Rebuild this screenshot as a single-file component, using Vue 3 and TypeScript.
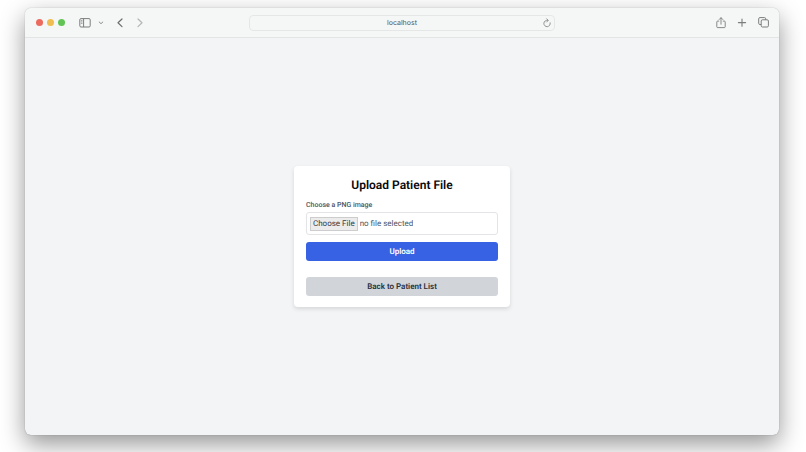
<script setup lang="ts">
import { computed, ref } from 'vue'

const fileName = ref<string>('')
const address = ref<string>('localhost')
const fileLabel = computed<string>(() => fileName.value || 'no file selected')

function onFileChange(event: Event): void {
  const input = event.target as HTMLInputElement
  fileName.value = input.files?.[0]?.name ?? ''
}
</script>

<template>
  <div class="desktop">
    <div class="window">
      <header class="toolbar">
        <div class="tools tools-left">
          <div class="lights">
            <button type="button" class="light red" aria-label="Close"></button>
            <button type="button" class="light yellow" aria-label="Minimize"></button>
            <button type="button" class="light green" aria-label="Zoom"></button>
          </div>
          <div class="sidebar-tools">
            <button type="button" class="icon" aria-label="Sidebar">
              <svg width="12" height="10" viewBox="0 0 12 10" fill="none" stroke="#7b7d7d">
                <rect x="0.8" y="0.6" width="10.4" height="8.4" rx="1.2" />
                <path d="M4.6 0.6v8.4" />
                <path d="M1.9 2.4h1.6M1.9 3.9h1.6M1.9 5.4h1.6" stroke-width="0.7" />
              </svg>
            </button>
            <button type="button" class="icon" aria-label="Tab groups">
              <svg width="6" height="4" viewBox="0 0 6 4" fill="none" stroke="#8b8d8d">
                <path d="M1.2 1l1.8 1.7L4.8 1" stroke-linecap="round" stroke-linejoin="round" />
              </svg>
            </button>
          </div>
          <div class="history-tools">
            <button type="button" class="icon" aria-label="Back">
              <svg width="6" height="10" viewBox="0 0 6 10" fill="none" stroke="#6c6e6e" stroke-width="1.2">
                <path d="M5 1L1 4.8 5 8.6" stroke-linecap="round" stroke-linejoin="round" />
              </svg>
            </button>
            <button type="button" class="icon" aria-label="Forward">
              <svg width="6" height="10" viewBox="0 0 6 10" fill="none" stroke="#b4b6b6" stroke-width="1.2">
                <path d="M1 1L5 4.8 1 8.6" stroke-linecap="round" stroke-linejoin="round" />
              </svg>
            </button>
          </div>
        </div>

        <div class="address">
          <input v-model="address" class="address-input" type="text" aria-label="Address" />
          <button type="button" class="icon reload" aria-label="Reload">
            <svg width="8" height="10" viewBox="0 0 8 10" fill="none" stroke="#7b7d7d" stroke-width="0.8">
              <path d="M7.2 4.8A3.2 3.2 0 1 1 4.6 2.3" stroke-linecap="round" />
              <path d="M3.7 0.8L5.3 2.4 3.7 4" stroke-linecap="round" stroke-linejoin="round" />
            </svg>
          </button>
        </div>

        <div class="tools tools-right">
          <button type="button" class="icon" aria-label="Share">
            <svg width="10" height="12" viewBox="0 0 10 12" fill="none" stroke="#7b7d7d" stroke-width="0.9">
              <path d="M3.2 4.1H1.6a0.8 0.8 0 0 0-0.8 0.8v4.9a0.8 0.8 0 0 0 0.8 0.8h6.8a0.8 0.8 0 0 0 0.8-0.8V4.9a0.8 0.8 0 0 0-0.8-0.8H6.8" />
              <path d="M5 7.2V0.9M3.2 2.5L5 0.7l1.8 1.8" stroke-linecap="round" stroke-linejoin="round" />
            </svg>
          </button>
          <button type="button" class="icon" aria-label="New tab">
            <svg width="10" height="10" viewBox="0 0 10 10" fill="none" stroke="#7b7d7d" stroke-width="1.1">
              <path d="M5 1v7.2M1.4 4.6h7.2" stroke-linecap="round" />
            </svg>
          </button>
          <button type="button" class="icon" aria-label="Tab overview">
            <svg width="11" height="11" viewBox="0 0 11 11" fill="none" stroke="#7b7d7d" stroke-width="1">
              <rect x="3.2" y="2.8" width="7.2" height="7.2" rx="1.2" />
              <path d="M3.2 7.5H1.9A1.2 1.2 0 0 1 0.7 6.3V1.8A1.2 1.2 0 0 1 1.9 0.6h4.6a1.2 1.2 0 0 1 1.2 1.2v1" />
            </svg>
          </button>
        </div>
      </header>

      <main class="page">
        <form class="card" @submit.prevent>
          <h1 class="title">Upload Patient File</h1>
          <label class="label" for="patient-file">Choose a PNG image</label>
          <div class="file-field">
            <span class="file-button" aria-hidden="true">Choose File</span>
            <span class="file-name">{{ fileLabel }}</span>
            <input
              id="patient-file"
              class="file-input"
              type="file"
              accept="image/png"
              @change="onFileChange"
            />
          </div>
          <button type="submit" class="button primary">Upload</button>
          <button type="button" class="button secondary">Back to Patient List</button>
        </form>
      </main>
    </div>
  </div>
</template>

<style>
body {
  margin: 0;
  background: #ffffff;
}
</style>

<style scoped>
.desktop {
  box-sizing: border-box;
  display: flex;
  min-height: 100vh;
  padding: 8px 27px 17px 25px;
  overflow: hidden;
  font-family: Roboto, "Liberation Sans", sans-serif;
  text-rendering: geometricPrecision;
}

.window {
  display: flex;
  flex: 1;
  flex-direction: column;
  min-width: 0;
  overflow: hidden;
  border-radius: 6px;
  background: #f2f4f6;
  box-shadow:
    0 0 1px rgba(0, 0, 0, 0.4),
    0 9px 24px rgba(0, 0, 0, 0.42);
}

.toolbar {
  display: grid;
  grid-template-columns: 1fr minmax(0, 306px) 1fr;
  align-items: center;
  height: 29px;
  border-bottom: 1px solid #e3e5e5;
  background: #f5f7f6;
}

.tools {
  display: flex;
  align-items: center;
}

.tools-left {
  gap: 13px;
  padding-left: 11px;
}

.tools-right {
  justify-content: flex-end;
  gap: 11px;
  padding-right: 10px;
}

.lights {
  display: flex;
  gap: 4px;
  padding-right: 1px;
}

.light {
  width: 7px;
  height: 7px;
  padding: 0;
  border: 0;
  border-radius: 50%;
}

.red {
  background: #ec6a5e;
}

.yellow {
  background: #f0bd50;
}

.green {
  background: #61c455;
}

.sidebar-tools {
  display: flex;
  align-items: center;
  gap: 7px;
}

.history-tools {
  display: flex;
  gap: 14px;
}

.icon {
  display: flex;
  padding: 0;
  border: 0;
  background: none;
}

.address {
  box-sizing: border-box;
  display: grid;
  grid-template-columns: 8px 1fr 8px;
  align-items: center;
  height: 16px;
  padding: 0 3px;
  border: 1px solid #e5e7e6;
  border-radius: 4px;
  background: #f5f7f6;
}

.address-input {
  grid-column: 2;
  min-width: 0;
  padding: 0;
  border: 0;
  background: none;
  color: #505252;
  font-family: Inter, "Liberation Sans", sans-serif;
  font-size: 7px;
  line-height: 12px;
  text-align: center;
  text-rendering: inherit;
}

.page {
  display: flex;
  flex: 1;
  align-items: center;
  justify-content: center;
}

.card {
  box-sizing: border-box;
  display: flex;
  flex-direction: column;
  width: 216px;
  padding: 11px 12px;
  border-radius: 4px;
  background: #ffffff;
  box-shadow: 0 2px 4px rgba(0, 0, 0, 0.12);
}

.title {
  margin: 0 0 7px;
  color: #08090b;
  font-size: 12px;
  font-weight: 600;
  line-height: 16px;
  text-align: center;
}

.label {
  margin-bottom: 2px;
  color: #4b5563;
  font-size: 7px;
  font-weight: 500;
  line-height: 10px;
}

.file-field {
  position: relative;
  box-sizing: border-box;
  display: flex;
  align-items: center;
  gap: 2px;
  height: 23px;
  margin-bottom: 7px;
  padding: 0 3px;
  border: 1px solid #e2e4e7;
  border-radius: 3px;
  color: #4b5563;
  font-size: 8px;
  line-height: 12px;
}

.file-button {
  padding: 0 2px;
  border: 1px solid #cdcdcd;
  background: #ececec;
  color: #333b47;
}

.file-name {
  overflow: hidden;
  text-overflow: ellipsis;
  white-space: nowrap;
}

.file-input {
  position: absolute;
  inset: 0;
  width: 100%;
  opacity: 0;
  cursor: pointer;
}

.button {
  height: 19px;
  padding: 0;
  border: 0;
  border-radius: 3px;
  font-family: inherit;
  font-size: 8px;
  font-weight: 600;
  line-height: 12px;
  text-rendering: inherit;
}

.primary {
  margin-bottom: 16px;
  background: #3662e3;
  color: #ffffff;
}

.secondary {
  background: #d1d5da;
  color: #273140;
}
</style>
